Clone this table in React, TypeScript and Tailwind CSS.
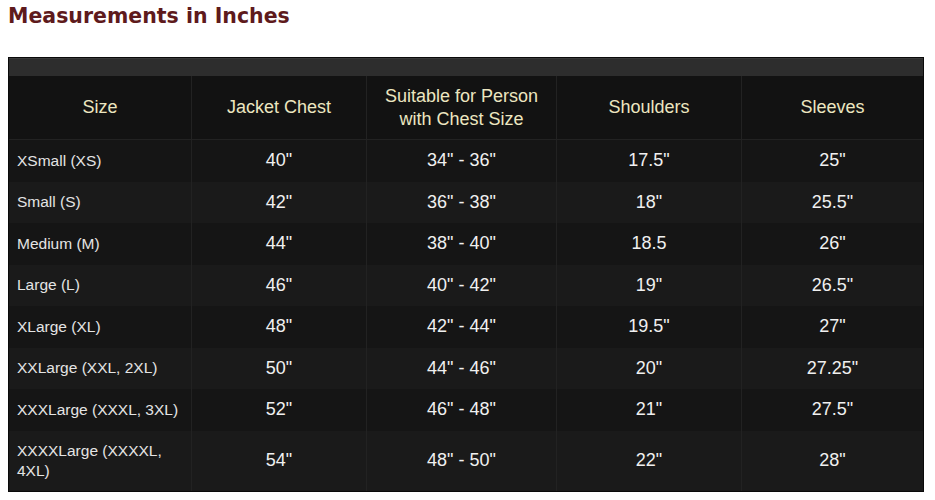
import React from "react";

const headers = [
  "Size",
  "Jacket Chest",
  "Suitable for Person\nwith Chest Size",
  "Shoulders",
  "Sleeves",
];

const rows: string[][] = [
  ["XSmall (XS)", "40\"", "34\" - 36\"", "17.5\"", "25\""],
  ["Small (S)", "42\"", "36\" - 38\"", "18\"", "25.5\""],
  ["Medium (M)", "44\"", "38\" - 40\"", "18.5", "26\""],
  ["Large (L)", "46\"", "40\" - 42\"", "19\"", "26.5\""],
  ["XLarge (XL)", "48\"", "42\" - 44\"", "19.5\"", "27\""],
  ["XXLarge (XXL, 2XL)", "50\"", "44\" - 46\"", "20\"", "27.25\""],
  ["XXXLarge (XXXL, 3XL)", "52\"", "46\" - 48\"", "21\"", "27.5\""],
  ["XXXXLarge (XXXXL, 4XL)", "54\"", "48\" - 50\"", "22\"", "28\""],
];

const cols = "grid-cols-[182px_175px_190px_185px_1fr]";

export default function App() {
  return (
    <div className="w-[935px] h-[500px] bg-white overflow-hidden font-['Liberation_Sans',Arial,sans-serif]">
      <h1 className="pl-[8px] pt-[4px] h-[57px] text-[20.5px] font-bold text-[#5e1a1c] leading-[24px] font-['DejaVu_Sans',Verdana,sans-serif]">
        Measurements in Inches
      </h1>
      <div className="ml-[8px] w-[916px] bg-[#161616] border border-[#0a0a0a]">
        <div className="h-[18px] bg-[#2d2d2d] border-t border-[#3a3a3a]" />
        <div className={`grid ${cols} h-[64px] bg-[#121212] border-b border-[#222]`}>
          {headers.map((h, i) => (
            <div
              key={i}
              className={`flex items-center justify-center text-center whitespace-pre-line text-[18px] leading-[23px] text-[#ece6c0] ${
                i > 0 ? "border-l border-[#222]" : ""
              }`}
            >
              {h}
            </div>
          ))}
        </div>
        {rows.map((r, ri) => (
          <div
            key={ri}
            className={`grid ${cols} ${
              ri === rows.length - 1 ? "h-[60px]" : "h-[41.5px]"
            } ${ri % 2 === 0 ? "bg-[#151515]" : "bg-[#1a1a1a]"}`}
          >
            {r.map((c, ci) => (
              <div
                key={ci}
                className={
                  ci === 0
                    ? "flex items-center pl-[8px] pr-[2px] text-[15.5px] leading-[20px] text-[#e4e4e4]"
                    : "flex items-center justify-center text-[18px] text-[#f0f0f0] border-l border-[#222]"
                }
              >
                {c}
              </div>
            ))}
          </div>
        ))}
      </div>
    </div>
  );
}
